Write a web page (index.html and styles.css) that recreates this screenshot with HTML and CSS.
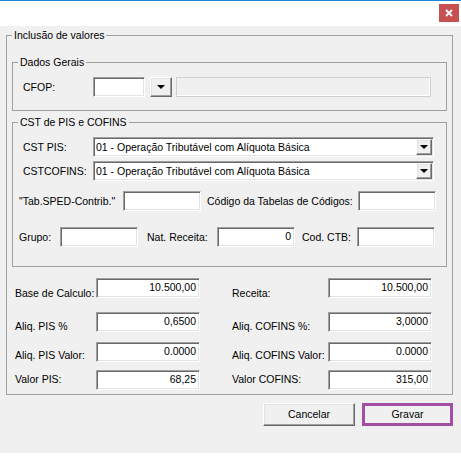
FILE: index.html
```html
<!DOCTYPE html>
<html lang="pt">
<head>
<meta charset="utf-8">
<title>Inclusão de valores</title>
<link rel="stylesheet" href="styles.css">
</head>
<body>
<div class="titlebar">
  <div class="close-btn"><svg class="close-x" width="8" height="8" viewBox="0 0 8 8"><path d="M1 1 L7 7 M7 1 L1 7" stroke="#ffffff" stroke-width="1.8" fill="none"/></svg></div>
</div>
<div class="client">
  <div class="group outer">
    <span class="legend">Inclusão de valores</span>
    <div class="group inner dados">
      <span class="legend">Dados Gerais</span>
      <div class="row">
        <span class="lbl w70">CFOP:</span>
        <span class="tb cfop"></span>
        <span class="dropbtn"><span class="tri"></span></span>
        <span class="tb-disabled"></span>
      </div>
    </div>
    <div class="group inner cst">
      <span class="legend">CST de PIS e COFINS</span>
      <div class="row r1">
        <span class="lbl w70">CST PIS:</span>
        <span class="combo"><span class="combo-text">01 - Operação Tributável com Alíquota Básica</span><span class="combo-btn"><span class="tri"></span></span></span>
      </div>
      <div class="row r2">
        <span class="lbl w70">CSTCOFINS:</span>
        <span class="combo"><span class="combo-text">01 - Operação Tributável com Alíquota Básica</span><span class="combo-btn"><span class="tri"></span></span></span>
      </div>
      <div class="row r3">
        <span class="lbl w104">"Tab.SPED-Contrib."</span>
        <span class="tb w78"></span>
        <span class="lbl ml6 w151">Código da Tabelas de Códigos:</span>
        <span class="tb w78"></span>
      </div>
      <div class="row r4">
        <span class="lbl w41">Grupo:</span>
        <span class="tb w78"></span>
        <span class="lbl ml9 w70">Nat. Receita:</span>
        <span class="tb w78 num">0</span>
        <span class="lbl ml7 w55">Cod. CTB:</span>
        <span class="tb w78"></span>
      </div>
    </div>
    <div class="values">
      <div class="vrow v1">
        <span class="vlbl">Base de Calculo:</span>
        <span class="tb num val">10.500,00</span>
        <span class="vlbl right">Receita:</span>
        <span class="tb num val">10.500,00</span>
      </div>
      <div class="vrow v2">
        <span class="vlbl">Aliq. PIS %</span>
        <span class="tb num val">0,6500</span>
        <span class="vlbl right">Aliq. COFINS %:</span>
        <span class="tb num val">3,0000</span>
      </div>
      <div class="vrow v3">
        <span class="vlbl">Aliq. PIS Valor:</span>
        <span class="tb num val">0.0000</span>
        <span class="vlbl right">Aliq. COFINS Valor:</span>
        <span class="tb num val">0.0000</span>
      </div>
      <div class="vrow v4">
        <span class="vlbl">Valor PIS:</span>
        <span class="tb num val">68,25</span>
        <span class="vlbl right">Valor COFINS:</span>
        <span class="tb num val">315,00</span>
      </div>
    </div>
  </div>
  <div class="buttons">
    <button class="btn cancel" type="button">Cancelar</button>
    <button class="btn save" type="button">Gravar</button>
  </div>
</div>
</body>
</html>
```

FILE: styles.css
```css
* { box-sizing: border-box; }
html, body { margin: 0; padding: 0; }
body {
  width: 461px;
  height: 456px;
  background: #ffffff;
  font-family: "Liberation Sans", Arial, sans-serif;
  font-size: 10.5px;
  line-height: 13px;
  color: #000;
  overflow: hidden;
}
.titlebar {
  height: 26px;
  border-top: 1px solid #1883d7;
  background: #ffffff;
  padding: 3px 2px 0 0;
}
.close-btn {
  display: block;
  margin-left: auto;
  width: 20px;
  height: 18px;
  background-color: #c75050;
  padding: 5px 0 0 6px;
}
.close-x { display: block; }
.client {
  height: 427px;
  background: #f0f0f0;
  padding: 9px 0 0 6px;
}
.group {
  position: relative;
  border: 1px solid #a0a0a0;
}
.legend {
  position: absolute;
  top: -7px;
  left: 5px;
  padding: 0 2px;
  line-height: 13px;
  background: #f0f0f0;
  white-space: nowrap;
}
.outer {
  width: 447px;
  padding: 26px 5px 4px 5px;
}
.inner { width: 435px; }
.dados { padding: 14px 0 13px 10px; }
.cst { margin-top: 11px; padding: 14px 0 19px 6px; }
.row { display: flex; align-items: center; height: 20px; }
.r1, .r2 { padding-left: 4px; }
.r2 { margin-top: 4px; }
.r3 { margin-top: 10px; }
.r4 { margin-top: 16px; }
.lbl { white-space: nowrap; flex: none; }
.w70 { width: 70px; }
.w104 { width: 104px; }
.w151 { width: 151px; }
.w41 { width: 41px; }
.w55 { width: 55px; }
.w78 { width: 78px; }
.ml6 { margin-left: 6px; }
.ml7 { margin-left: 7px; }
.ml9 { margin-left: 9px; }

.tb {
  display: block;
  flex: none;
  height: 20px;
  background: #fff;
  border: 1px solid;
  border-color: #a0a0a0 #fff #fff #a0a0a0;
  box-shadow: inset 1px 1px 0 #696969, inset -1px -1px 0 #e3e3e3;
  padding: 2px 3px 0 3px;
  white-space: nowrap;
}
.num { text-align: right; }
.cfop { width: 52px; }
.dropbtn {
  flex: none;
  width: 22px;
  height: 20px;
  margin-left: 5px;
  background: #f0f0f0;
  border: 1px solid;
  border-color: #fff #696969 #696969 #fff;
  box-shadow: inset -1px -1px 0 #a0a0a0, inset 1px 1px 0 #e3e3e3;
  display: flex;
  align-items: center;
  justify-content: center;
}
.tri {
  width: 0;
  height: 0;
  border-left: 4px solid transparent;
  border-right: 4px solid transparent;
  border-top: 4px solid #000;
}
.tb-disabled {
  flex: none;
  width: 255px;
  height: 20px;
  margin-left: 4px;
  border: 1px solid #d0d0d0;
  box-shadow: inset -1px -1px 0 #fff;
  background: #f0f0f0;
}
.combo {
  flex: none;
  width: 341px;
  height: 20px;
  background: #fff;
  border: 1px solid;
  border-color: #a0a0a0 #fff #fff #a0a0a0;
  box-shadow: inset 1px 1px 0 #696969, inset -1px -1px 0 #e3e3e3;
  padding: 1px;
  display: flex;
  align-items: center;
}
.combo-text { flex: 1; padding-left: 1px; white-space: nowrap; overflow: hidden; }
.combo-btn {
  flex: none;
  width: 16px;
  height: 16px;
  background: #f0f0f0;
  border: 1px solid;
  border-color: #fff #696969 #696969 #fff;
  box-shadow: inset -1px -1px 0 #a0a0a0, inset 1px 1px 0 #e3e3e3;
  display: flex;
  align-items: center;
  justify-content: center;
}

.values { padding: 11px 0 0 3px; }
.vrow {
  display: grid;
  grid-template-columns: 81px 104px 32px 96px 104px;
  align-items: start;
  height: 20px;
}
.v2 { margin-top: 14px; }
.v3 { margin-top: 10px; }
.v4 { margin-top: 8px; }
.vlbl { white-space: nowrap; grid-column: 1; }
.vlbl.right { grid-column: 4; }
.val { grid-column: 2; }
.vlbl.right + .val { grid-column: 5; }
.v1 .vlbl { margin-top: 9px; }
.v2 .vlbl { margin-top: 8px; }
.v3 .vlbl { margin-top: 7px; }
.v4 .vlbl { margin-top: 3px; }

.buttons {
  display: flex;
  justify-content: flex-end;
  gap: 7px;
  margin-top: 8px;
  padding-right: 8px;
}
.btn {
  font-family: inherit;
  font-size: 10.5px;
  line-height: 13px;
  height: 23px;
  margin: 0;
  color: #000;
  background: #f0f0f0;
  padding: 0;
}
.cancel {
  width: 92px;
  border: 1px solid;
  border-color: #fff #696969 #696969 #fff;
  box-shadow: inset -1px -1px 0 #a0a0a0, inset 1px 1px 0 #e3e3e3;
}
.save {
  width: 91px;
  border: 3px solid #a24ea2;
}
```
